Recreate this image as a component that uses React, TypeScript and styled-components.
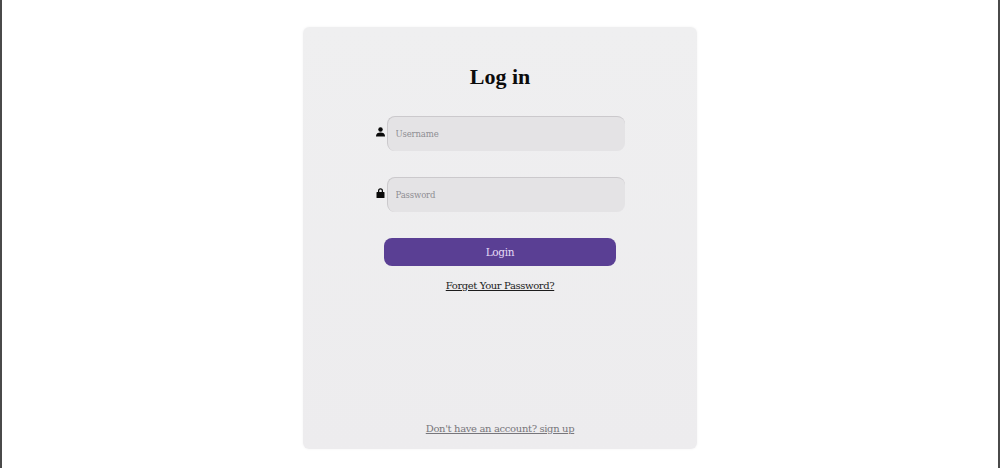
import React from "react";
import styled, { createGlobalStyle } from "styled-components";

const GlobalStyle = createGlobalStyle`
  html, body {
    margin: 0;
    padding: 0;
    background: #fff;
  }
  * {
    box-sizing: border-box;
  }
`;

const Page = styled.div`
  width: 1000px;
  height: 468px;
  padding-top: 27px;
  display: flex;
  justify-content: center;
  align-items: flex-start;
  background: #fff;
  border-left: 2px solid #4a4a4a;
  border-right: 2px solid #4a4a4a;
  overflow: hidden;
  font-family: "DejaVu Serif", "Liberation Serif", serif;
`;

const Card = styled.main`
  width: 394px;
  height: 422px;
  padding: 36px 0 11px;
  display: flex;
  flex-direction: column;
  align-items: center;
  background: linear-gradient(#efeff0, #edecee);
  border-radius: 6px;
  box-shadow: 0 0 3px rgba(0, 0, 0, 0.05);
`;

const Title = styled.h1`
  margin: 0 0 25px;
  height: 28px;
  line-height: 28px;
  font-family: "Liberation Serif", serif;
  font-size: 22px;
  font-weight: 700;
  color: #0c0c0c;
`;

const FieldRow = styled.label`
  display: flex;
  align-items: center;
  gap: 2px;
  margin-bottom: 26px;
`;

const FieldIcon = styled.svg`
  width: 9px;
  height: 10px;
  margin-top: -4px;
  fill: #0a0a0a;
`;

const FieldInput = styled.input`
  width: 238px;
  height: 35px;
  padding: 0 8px;
  border: none;
  border-top: 1px solid #cbc9cc;
  border-left: 1px solid #cbc9cc;
  border-radius: 8px;
  outline: none;
  background: #e4e3e5;
  font-family: inherit;
  font-size: 8.5px;
  letter-spacing: -0.15px;
  color: #333;

  &::placeholder {
    color: #8f8e93;
    opacity: 1;
  }
`;

const LoginButton = styled.button`
  width: 232px;
  height: 28px;
  margin-bottom: 11px;
  border: none;
  border-radius: 8px;
  background: #5a3f94;
  font-family: inherit;
  font-size: 10.5px;
  letter-spacing: -0.3px;
  color: #e4daf6;
  cursor: pointer;
`;

const ForgotLink = styled.a`
  font-size: 10px;
  letter-spacing: -0.38px;
  line-height: 18px;
  color: #1c1c1c;
  text-decoration: underline;
  cursor: pointer;
`;

const SignupLink = styled.a`
  margin-top: auto;
  font-size: 10px;
  letter-spacing: -0.35px;
  line-height: 18px;
  color: #77767b;
  text-decoration: underline;
  cursor: pointer;
`;

export default function App() {
  return (
    <>
      <GlobalStyle />
      <Page>
        <Card>
          <Title>Log in</Title>
          <FieldRow>
            <FieldIcon viewBox="0 0 18 20">
              <circle cx="9" cy="5" r="4.5" />
              <path d="M0 18c0-5 4-7 9-7s9 2 9 7v1H0z" />
            </FieldIcon>
            <FieldInput placeholder="Username" />
          </FieldRow>
          <FieldRow>
            <FieldIcon viewBox="0 0 18 20">
              <path d="M4 8V5.500a5 5 0 0 1 10 0V8h2a1 1 0 0 1 1 1v10a1 1 0 0 1-1 1H2a1 1 0 0 1-1-1V9a1 1 0 0 1 1-1zm2.500 0h5V5.500a2.500 2.500 0 0 0-5 0z" />
            </FieldIcon>
            <FieldInput type="password" placeholder="Password" />
          </FieldRow>
          <LoginButton>Login</LoginButton>
          <ForgotLink>Forget Your Password?</ForgotLink>
          <SignupLink>Don't have an account? sign up</SignupLink>
        </Card>
      </Page>
    </>
  );
}
